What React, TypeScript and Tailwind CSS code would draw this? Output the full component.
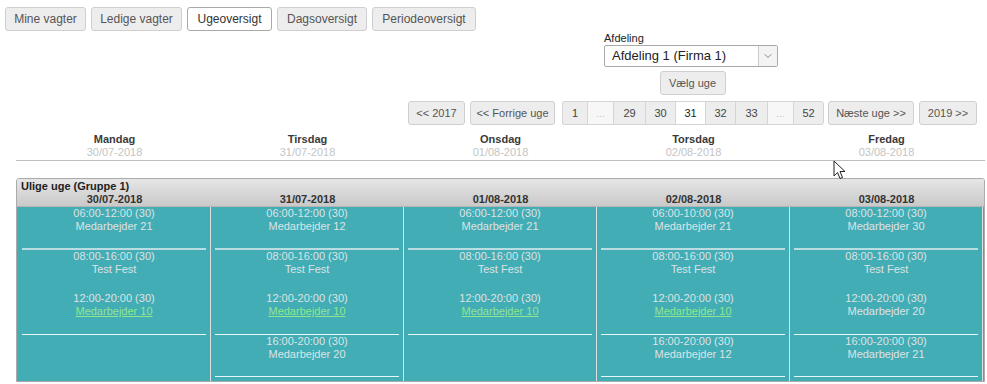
import { ChevronDown } from 'lucide-react';

type Shift = { time: string; name: string; link?: boolean };

const tabs = [
  { label: 'Mine vagter', w: 'w-[81px]' },
  { label: 'Ledige vagter', w: 'w-[91px]' },
  { label: 'Ugeoversigt', w: 'w-[85px]', active: true },
  { label: 'Dagsoversigt', w: 'w-[90px]' },
  { label: 'Periodeoversigt', w: 'w-[104px]' },
];

const weeks = [
  { label: '1', w: 'w-[25px]', green: true },
  { label: '...', w: 'w-[26px]', gap: true },
  { label: '29', w: 'w-[32px]' },
  { label: '30', w: 'w-[30px]' },
  { label: '31', w: 'w-[30px]', active: true },
  { label: '32', w: 'w-[30px]' },
  { label: '33', w: 'w-[32px]' },
  { label: '...', w: 'w-[26px]', gap: true },
  { label: '52', w: 'w-[31px]' },
];

const days = [
  { name: 'Mandag', date: '30/07-2018' },
  { name: 'Tirsdag', date: '31/07-2018' },
  { name: 'Onsdag', date: '01/08-2018' },
  { name: 'Torsdag', date: '02/08-2018' },
  { name: 'Fredag', date: '03/08-2018' },
];

// each column: blocks of shifts, every block closed by a line
const columns: Shift[][][] = [
  [
    [{ time: '06:00-12:00 (30)', name: 'Medarbejder 21' }],
    [
      { time: '08:00-16:00 (30)', name: 'Test Fest' },
      { time: '12:00-20:00 (30)', name: 'Medarbejder 10', link: true },
    ],
  ],
  [
    [{ time: '06:00-12:00 (30)', name: 'Medarbejder 12' }],
    [
      { time: '08:00-16:00 (30)', name: 'Test Fest' },
      { time: '12:00-20:00 (30)', name: 'Medarbejder 10', link: true },
    ],
    [{ time: '16:00-20:00 (30)', name: 'Medarbejder 20' }],
  ],
  [
    [{ time: '06:00-12:00 (30)', name: 'Medarbejder 21' }],
    [
      { time: '08:00-16:00 (30)', name: 'Test Fest' },
      { time: '12:00-20:00 (30)', name: 'Medarbejder 10', link: true },
    ],
  ],
  [
    [{ time: '06:00-10:00 (30)', name: 'Medarbejder 21' }],
    [
      { time: '08:00-16:00 (30)', name: 'Test Fest' },
      { time: '12:00-20:00 (30)', name: 'Medarbejder 10', link: true },
    ],
    [{ time: '16:00-20:00 (30)', name: 'Medarbejder 12' }],
  ],
  [
    [{ time: '08:00-12:00 (30)', name: 'Medarbejder 30' }],
    [
      { time: '08:00-16:00 (30)', name: 'Test Fest' },
      { time: '12:00-20:00 (30)', name: 'Medarbejder 20' },
    ],
    [{ time: '16:00-20:00 (30)', name: 'Medarbejder 21' }],
  ],
];

const btn =
  'flex h-[24px] items-center justify-center rounded-[3px] border border-[#cfcfcf] bg-[#ededed] text-[11px] text-[#555]';

function ShiftRow({ shift, tall }: { shift: Shift; tall?: boolean }) {
  return (
    <div className={tall ? 'h-[42px] text-center' : 'h-[41px] text-center'}>
      <div className="leading-[13px] text-[#dde3e4]">{shift.time}</div>
      <div
        className={
          shift.link
            ? 'leading-[13px] text-[#8fe68f] underline'
            : 'leading-[13px] text-[#dde3e4]'
        }
      >
        {shift.name}
      </div>
    </div>
  );
}

export default function App() {
  return (
    <div className="relative h-[384px] w-[987px] overflow-hidden bg-white font-['Liberation_Sans',Arial,sans-serif] text-[11px]">
      {/* tabs */}
      <div className="flex gap-[5px] pl-[5px] pt-[7px]">
        {tabs.map((t) => (
          <button
            key={t.label}
            className={
              t.active
                ? `${t.w} flex h-[24px] items-center justify-center rounded-[3px] border border-[#a9a9a9] bg-white text-[12px] text-[#333]`
                : `${t.w} flex h-[24px] items-center justify-center rounded-[3px] border border-[#cfcfcf] bg-[#ededed] text-[12px] text-[#555]`
            }
          >
            {t.label}
          </button>
        ))}
      </div>

      {/* department */}
      <div className="ml-[604px] mt-[1px] w-[174px]">
        <div className="h-[13px] leading-[13px] text-[#222]">Afdeling</div>
        <div className="flex h-[22px] items-center rounded-[2px] border border-[#a9a9a9] bg-white">
          <span className="flex-1 pl-[7px] text-[13px] text-[#222]">Afdeling 1 (Firma 1)</span>
          <span className="flex h-full w-[19px] items-center justify-center border-l border-[#c9c9c9] bg-[#f3f3f3]">
            <ChevronDown className="h-[12px] w-[12px] text-[#666]" strokeWidth={1.5} />
          </span>
        </div>
        <div className="mt-[4px] flex justify-center pl-[3px]">
          <button className={`${btn} h-[23px] w-[66px]`}>Vælg uge</button>
        </div>
      </div>

      {/* week pagination */}
      <div className="mt-[6px] flex justify-end pr-[10px]">
        <button className={`${btn} w-[57px]`}>&lt;&lt; 2017</button>
        <button className={`${btn} ml-[5px] w-[85px]`}>&lt;&lt; Forrige uge</button>
        <div className="ml-[7px] flex">
          {weeks.map((w, i) => (
            <div
              key={i}
              className={[
                'flex h-[24px] items-center justify-center border-y border-l border-[#d5d5d5] text-[11px]',
                w.w,
                i === 0 ? 'rounded-l-[3px]' : '',
                i === weeks.length - 1 ? 'rounded-r-[3px] border-r' : '',
                w.active ? 'bg-white text-[#222]' : w.gap ? 'bg-[#f7f7f7] text-[#c8c8c8]' : 'bg-[#ededed] text-[#444]',
                w.green ? 'text-[#3d7d2f]' : '',
              ].join(' ')}
            >
              {w.label}
            </div>
          ))}
        </div>
        <button className={`${btn} ml-[4px] w-[86px]`}>Næste uge &gt;&gt;</button>
        <button className={`${btn} ml-[5px] w-[58px]`}>2019 &gt;&gt;</button>
      </div>

      {/* day headings */}
      <div className="ml-[16px] mt-[8px] w-[969px] border-b border-[#bdbdbd] pb-[1px]">
        <div className="grid grid-cols-[repeat(5,193px)] pl-[2px]">
          {days.map((d) => (
            <div key={d.name} className="text-center">
              <div className="font-bold leading-[13px] text-[#3a3a3a]">{d.name}</div>
              <div className="leading-[13px] text-[#c4c4c4]">{d.date}</div>
            </div>
          ))}
        </div>
      </div>

      {/* group */}
      <div className="ml-[16px] mt-[17px] w-[969px] overflow-hidden rounded-t-[3px] border border-[#ababab]">
        <div className="h-[28px] border-b border-[#b5b5b5] bg-linear-to-b from-[#e6e6e6] to-[#c9c9c9]">
          <div className="pl-[4px] font-bold leading-[14px] text-[#222]">Ulige uge (Gruppe 1)</div>
          <div className="grid grid-cols-[repeat(5,193px)] pl-[1px]">
            {days.map((d) => (
              <div key={d.date} className="text-center font-bold leading-[13px] text-[#333]">
                {d.date}
              </div>
            ))}
          </div>
        </div>
        <div className="grid h-[174px] grid-cols-[repeat(5,193px)] bg-[#43adb6] pl-[1px]">
          {columns.map((blocks, ci) => (
            <div key={ci} className="border-r border-[#dedede]">
              {blocks.map((block, bi) => (
                <div key={bi}>
                  {block.map((s, si) => (
                    <ShiftRow key={si} shift={s} tall={block.length > 1} />
                  ))}
                  <div
                    className={
                      bi === 0
                        ? 'mx-[4px] h-[2px] bg-[#b9dde0]'
                        : 'mx-[4px] h-px bg-[#e9f5f6]'
                    }
                  />
                </div>
              ))}
            </div>
          ))}
        </div>
      </div>

      {/* mouse pointer */}
      <svg className="absolute left-[833px] top-[160px]" width="14" height="20" viewBox="0 0 14 20">
        <path d="M1 1 L1 16 L4.5 12.5 L7 18.5 L9.5 17.5 L7 11.5 L12 11.5 Z" fill="#fff" stroke="#222" strokeWidth="1" strokeLinejoin="round" />
      </svg>
    </div>
  );
}
